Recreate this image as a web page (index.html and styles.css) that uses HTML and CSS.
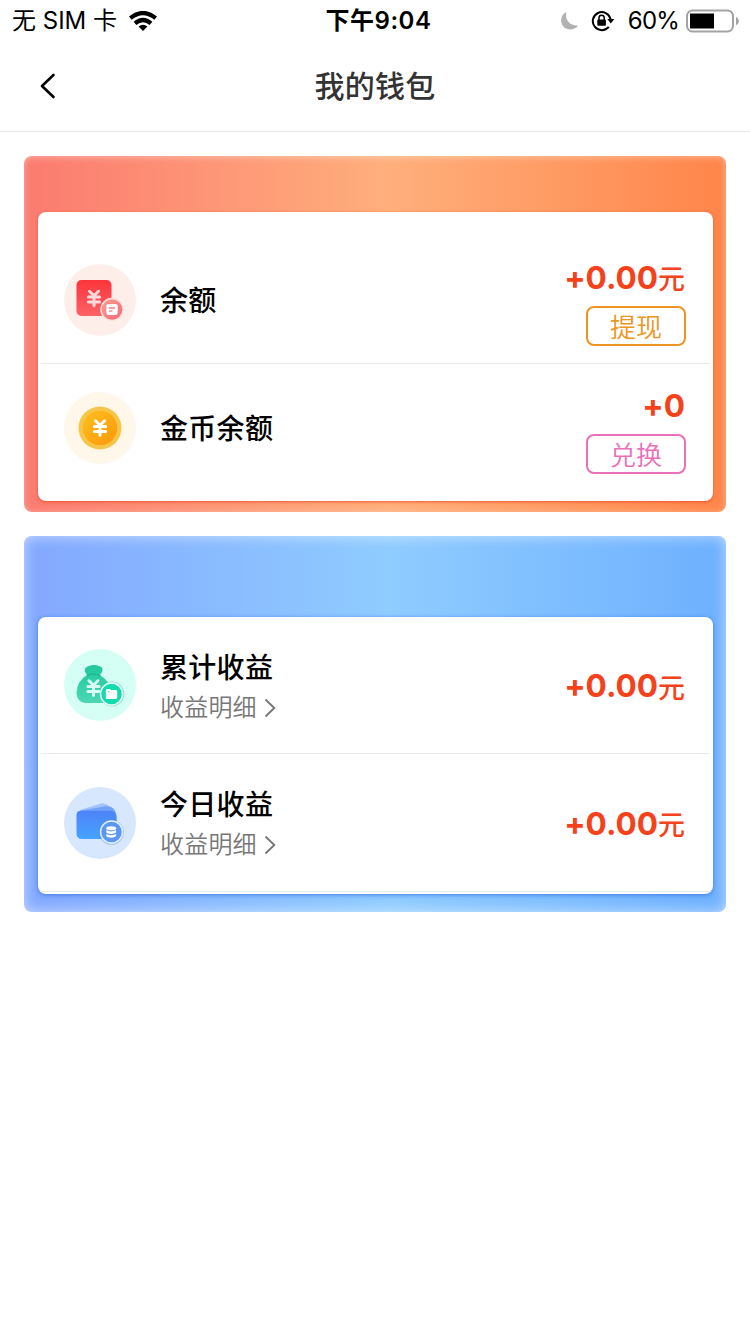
FILE: index.html
```
<!DOCTYPE html>
<html lang="zh-CN">
<head>
<meta charset="utf-8">
<title>我的钱包</title>
<link rel="stylesheet" href="styles.css">
</head>
<body>
<div class="status">
  <div class="status-left">
    <span>无 SIM 卡</span>
    <svg class="wifi" width="28" height="20" viewBox="0 0 28 20">
      <g fill="none" stroke="#000" stroke-width="4.2"><path d="M1.3 7.2Q14-3.2 26.7 7.2"/><path d="M6 12.4Q14 5.6 22 12.4"/></g>
      <path d="M9.6 15.6Q14 12 18.4 15.6L14 20z"/>
    </svg>
  </div>
  <div class="status-time">下午9:04</div>
  <div class="status-right">
    <svg width="20" height="20" viewBox="0 0 20 20"><path d="M7.5 1A9.2 9.2 0 1 0 19 14.4A10.4 10.4 0 0 1 7.5 1z" fill="#b2b2b2"/></svg>
    <svg class="lock" width="24" height="22" viewBox="0 0 24 22">
      <path d="M17.8 16.8A9 9 0 1 1 19.6 9.2" fill="none" stroke="#000" stroke-width="2"/>
      <path d="M16.3 9h7l-3.5 4.5z"/>
      <rect x="6.3" y="9.5" width="8.6" height="6.3" rx="1"/>
      <path d="M8 10V7.8a2.6 2.6 0 0 1 5.2 0V10" fill="none" stroke="#000" stroke-width="1.5"/>
    </svg>
    <span class="percent">60%</span>
    <svg class="battery" width="54" height="24" viewBox="0 0 54 24">
      <rect x="1" y="1.5" width="46" height="21" rx="5.5" fill="#fff" stroke="#a3a3a3" stroke-width="2"/>
      <path d="M4 4.5h24v15h-24z"/>
      <path d="M50 8Q52.8 9 52.8 12T50 16z" fill="#a3a3a3"/>
    </svg>
  </div>
</div>
<header class="nav">
  <svg class="back" width="18" height="26" viewBox="0 0 18 26"><path d="M14.5 2L3 13l11.5 11" fill="none" stroke="#000" stroke-width="2.6" stroke-linecap="round" stroke-linejoin="round"/></svg>
  <h1 class="title">我的钱包</h1>
</header>
<main class="content">
  <section class="card card-warm">
    <div class="panel">
      <div class="row">
        <svg class="icon" viewBox="0 0 72 72">
          <defs>
            <linearGradient id="red" x2="0" y2="1"><stop stop-color="#fb353b"/><stop offset="1" stop-color="#fd6267"/></linearGradient>
            <linearGradient id="pink" x2="1" y2="1"><stop stop-color="#fda28f"/><stop offset="1" stop-color="#f56379"/></linearGradient>
            <g id="yen" fill="none" stroke-width="3" stroke-linecap="round"><path d="M-4.5-7.2L0-2.8L4.5-7.2M0-2.8V7.2M-5.6-1.6H5.6M-5.6 3.4H5.6"/></g>
          </defs>
          <circle cx="36" cy="36" r="36" fill="#feeeea"/>
          <rect x="12.5" y="16" width="35" height="36" rx="5" fill="url(#red)"/>
          <use href="#yen" x="30" y="34.5" stroke="#ffdcdc"/>
          <circle cx="48" cy="45.5" r="11" fill="url(#pink)" stroke="#ffe3de" stroke-width="1.4"/>
          <rect x="42.3" y="40" width="11.4" height="11" rx="2.3" fill="#fff"/>
          <path d="M45 44h6M45 47.2h3.5" stroke="#f77c85" stroke-width="1.3"/>
        </svg>
        <div class="label">余额</div>
        <div class="side">
          <div class="amount"><span class="num"><span class="plus">+</span>0.00</span><span class="unit">元</span></div>
          <button class="btn btn-orange">提现</button>
        </div>
      </div>
      <div class="row">
        <svg class="icon" viewBox="0 0 72 72">
          <defs><linearGradient id="gold" x2="1" y2="1"><stop stop-color="#ffc01c"/><stop offset="1" stop-color="#fc960b"/></linearGradient></defs>
          <circle cx="36" cy="36" r="36" fill="#fff7e9"/>
          <circle cx="36" cy="36" r="21.5" fill="#f6c64b"/>
          <circle cx="36" cy="36" r="17.3" fill="url(#gold)"/>
          <use href="#yen" x="36" y="36" stroke="#fff"/>
        </svg>
        <div class="label">金币余额</div>
        <div class="side">
          <div class="amount"><span class="num"><span class="plus">+</span>0</span></div>
          <button class="btn btn-pink">兑换</button>
        </div>
      </div>
    </div>
  </section>
  <section class="card card-cool">
    <div class="panel">
      <div class="row">
        <svg class="icon" viewBox="0 0 72 72">
          <defs><linearGradient id="green" x2="0" y2="1"><stop stop-color="#20c89b"/><stop offset="1" stop-color="#4bd7b4"/></linearGradient></defs>
          <circle cx="36" cy="36" r="36" fill="#d5fff4"/>
          <path d="M23 26C19 21 21 18 25 17Q30 15 35 17C39 18 40 21 36 26Q48 34 47.5 44Q47 54 37 54H21Q13 53 12.5 44Q13 32 23 26z" fill="url(#green)"/>
          <path d="M23.2 26.6Q30 23.7 36 26.6" fill="none" stroke="#19b689" stroke-width="1.3"/>
          <use href="#yen" x="29.5" y="39" stroke="#d9fff5"/>
          <circle cx="48" cy="45" r="12.4" fill="#1a9d79" opacity=".3"/>
          <circle cx="47.5" cy="45" r="11" fill="#12dbad" stroke="#e5fff9" stroke-width="1.5"/>
          <path d="M41.8 41Q41.8 40 43 40h3l1 1h4.8q1.4 0 1.4 1.2v6.3q0 1.5-1.4 1.5h-8.6q-1.4 0-1.4-1.5z" fill="#fff"/>
          <path d="M44.7 42v1.3" stroke="#12dbad" stroke-width="1.1"/>
        </svg>
        <div class="info">
          <div class="label">累计收益</div>
          <div class="sub">收益明细<svg class="chev" width="12" height="20" viewBox="0 0 12 20"><path d="M1.5 1.5L10.3 10L1.5 18.5" fill="none" stroke="#777" stroke-width="1.9"/></svg></div>
        </div>
        <div class="amount"><span class="num"><span class="plus">+</span>0.00</span><span class="unit">元</span></div>
      </div>
      <div class="row">
        <svg class="icon" viewBox="0 0 72 72">
          <defs>
            <linearGradient id="blue" x2="0" y2="1"><stop stop-color="#4d83f7"/><stop offset="1" stop-color="#45a3ff"/></linearGradient>
          </defs>
          <circle cx="36" cy="36" r="36" fill="#d7e7fe"/>
          <path d="M16 23L37 16.5Q41 15.5 45 19L51 24V40H16z" fill="#a2c3fd"/>
          <path d="M17 23.5L43 19Q51 19 52.5 29V44H17z" fill="#72a3fa"/>
          <path d="M12.5 28Q12.5 23.7 17 23.7H46Q52.5 23.7 52.5 31V46Q52.5 52 47 52H18Q12.5 52 12.5 46z" fill="url(#blue)"/>
          <circle cx="47.5" cy="45.3" r="12.5" fill="#3977db" opacity=".3"/>
          <circle cx="47.5" cy="45" r="11" fill="#5b97f4" stroke="#e8f2ff" stroke-width="1.4"/>
          <g fill="#fff"><ellipse cx="47.2" cy="41.2" rx="4.9" ry="2"/><path d="M42.3 43.1q4.9 2.7 9.8 0v2.2q-1 1.7-4.9 1.7t-4.9-1.7zM42.3 46.9q4.9 2.7 9.8 0v2.2q-1 1.7-4.9 1.7t-4.9-1.7z"/></g>
        </svg>
        <div class="info">
          <div class="label">今日收益</div>
          <div class="sub">收益明细<svg class="chev" width="12" height="20" viewBox="0 0 12 20"><path d="M1.5 1.5L10.3 10L1.5 18.5" fill="none" stroke="#777" stroke-width="1.9"/></svg></div>
        </div>
        <div class="amount"><span class="num"><span class="plus">+</span>0.00</span><span class="unit">元</span></div>
      </div>
    </div>
  </section>
</main>
</body>
</html>
```
FILE: styles.css
```
* { box-sizing: border-box; }
body {
  margin: 0;
  min-height: 1334px;
  background: #fff;
  color: #000;
  font-family: Inter, "Noto Sans CJK SC", sans-serif;
}
svg { display: block; flex: none; }

.status {
  display: grid;
  grid-template-columns: 1fr auto 1fr;
  align-items: center;
  height: 40px;
  padding: 1px 10px 0 12px;
  font-size: 24px;
  line-height: 40px;
}
.status-left, .status-right { display: flex; align-items: center; }
.status-left { gap: 12px; }
.status-right { justify-content: flex-end; }
.status-time { font-weight: 600; letter-spacing: 0.5px; padding-left: 5px; }
.lock { margin: 0 13px 0 12px; }
.percent { letter-spacing: -0.8px; }
.battery { margin-left: 7px; }

.nav {
  display: grid;
  grid-template-columns: 100px 1fr 100px;
  align-items: center;
  height: 92px;
  border-bottom: 1px solid #e8eaec;
}
.back { margin-left: 39px; }
.title {
  margin: 0;
  text-align: center;
  font-size: 30px;
  font-weight: 500;
  letter-spacing: 0.2px;
  line-height: 44px;
  color: #333;
}

.content {
  display: flex;
  flex-direction: column;
  gap: 24px;
  padding: 24px;
}
.card { border-radius: 8px; }
.card-warm {
  height: 356px;
  padding: 56px 13px 11px 14px;
  background: linear-gradient(90deg, #fb7b70, #ffaf7c 52%, #ff854a);
  box-shadow: inset 0 1px 7px rgba(255, 255, 255, 0.4);
}
.card-cool {
  height: 376px;
  padding: 81px 13px 18px 14px;
  background: linear-gradient(90deg, #83a8ff, #8fccff 52%, #6eb0ff);
  box-shadow: inset 0 0 14px rgba(255, 255, 255, 0.6);
}
.panel {
  height: 100%;
  border-radius: 8px;
  background: #fff;
}
.card-warm .panel { padding-top: 24px; box-shadow: 0 1px 3px rgba(232, 65, 25, 0.75); }
.card-cool .panel { box-shadow: 0 1px 4px rgba(45, 105, 225, 0.75); }

.row {
  display: flex;
  align-items: center;
  height: 128px;
  margin: 0 3px;
  padding: 0 25px 0 23px;
  border-bottom: 1px solid #e9ebee;
}
.card-warm .row:last-child { border-bottom-color: transparent; }
.card-cool .row { height: 138px; }
.card-cool .row:first-child { height: 137px; }
.icon { width: 72px; height: 72px; margin-right: 24px; }
.label {
  flex: 1;
  padding-top: 3px;
  font-size: 28px;
  font-weight: 500;
  letter-spacing: 0.3px;
  line-height: 40px;
}
.info { flex: 1; padding-top: 1px; }
.sub {
  display: flex;
  align-items: center;
  gap: 7px;
  margin-top: 1px;
  font-size: 24px;
  font-weight: 350;
  letter-spacing: 0.2px;
  line-height: 38px;
  color: #777;
}
.side { display: flex; flex-direction: column; align-items: flex-end; }
.side .amount { margin: 4px 0 8px; }
.side .btn { margin-right: -1px; }
.amount {
  display: flex;
  align-items: center;
  height: 40px;
  color: #f5421b;
}
.card-cool .amount { padding-top: 2px; }
.num {
  font-size: 31.5px;
  font-weight: 700;
  line-height: 40px;
}
.plus { display: inline-block; line-height: 1; }
.unit { font-size: 27px; font-weight: 500; }
.btn {
  width: 100px;
  height: 40px;
  padding: 0;
  border: 2px solid currentColor;
  border-radius: 8px;
  background: #fff;
  font: 350 26px/33px "Noto Sans CJK SC", sans-serif;
}
.btn-orange { color: #ee9422; }
.btn-pink { color: #ea70b8; }
```
